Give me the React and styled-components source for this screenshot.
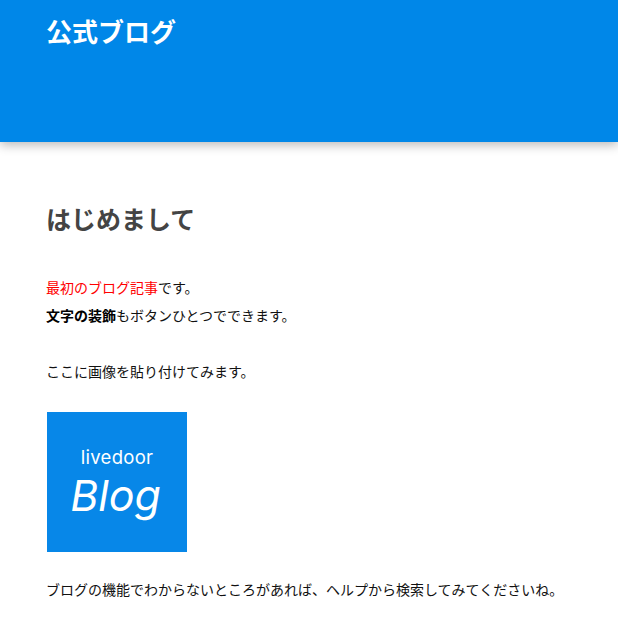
import React from "react";
import styled, { createGlobalStyle } from "styled-components";

const GlobalStyle = createGlobalStyle`
  html, body {
    margin: 0;
    padding: 0;
    background: #fff;
    overflow: hidden;
    font-family: "Liberation Sans", "Noto Sans CJK JP", sans-serif;
  }
`;

const Header = styled.header`
  height: 142px;
  padding: 14px 46px 0;
  box-sizing: border-box;
  background: #0087e8;
  box-shadow: 0 3px 10px rgba(0, 0, 0, 0.28);
`;

const BlogName = styled.h1`
  margin: 0;
  font-size: 26px;
  line-height: 38px;
  font-weight: 700;
  color: #fff;
`;

const Article = styled.main`
  padding: 61px 46px 0;
`;

const ArticleTitle = styled.h2`
  margin: 0 0 37px;
  font-size: 25px;
  line-height: 34px;
  font-weight: 700;
  color: #444;
`;

const Line = styled.p`
  margin: 0 0 ${(p) => p.$after || 0}px;
  font-size: 14px;
  line-height: 28px;
  color: #111;
`;

const Red = styled.span`
  color: #ff0000;
`;

const Strong = styled.strong`
  color: #000;
  font-weight: 700;
`;

const Logo = styled.div`
  width: 140px;
  height: 140px;
  margin: 26px 0 24px 1px;
  padding-top: 33px;
  box-sizing: border-box;
  background: #0787e8;
  color: #fff;
  display: flex;
  flex-direction: column;
  align-items: center;
  font-family: Inter, sans-serif;
`;

const LogoTop = styled.span`
  font-size: 18.5px;
  line-height: 24px;
  letter-spacing: 0.3px;
`;

const LogoMain = styled.span`
  font-size: 43px;
  line-height: 50px;
  font-style: italic;
  font-weight: 400;
  margin-top: 1px;
  margin-right: 3px;
`;

export default function App() {
  return (
    <>
      <GlobalStyle />
      <Header>
        <BlogName>公式ブログ</BlogName>
      </Header>
      <Article>
        <ArticleTitle>はじめまして</ArticleTitle>
        <Line>
          <Red>最初のブログ記事</Red>です。
        </Line>
        <Line $after={28}>
          <Strong>文字の装飾</Strong>もボタンひとつでできます。
        </Line>
        <Line>ここに画像を貼り付けてみます。</Line>
        <Logo>
          <LogoTop>livedoor</LogoTop>
          <LogoMain>Blog</LogoMain>
        </Logo>
        <Line>ブログの機能でわからないところがあれば、ヘルプから検索してみてくださいね。</Line>
      </Article>
    </>
  );
}
